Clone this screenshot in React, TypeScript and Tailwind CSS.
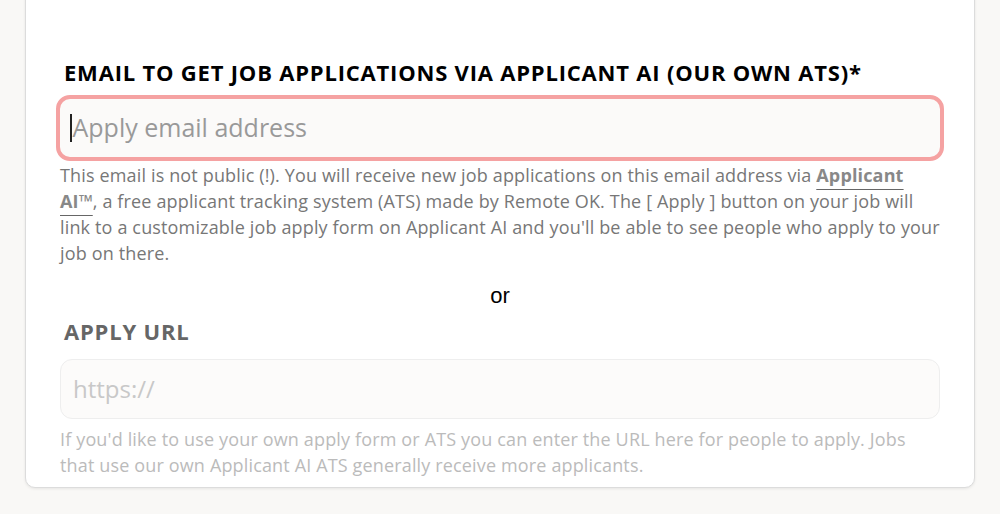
export default function App() {
  const font = { fontFamily: "'Open Sans', Lato, sans-serif" };
  return (
    <div className="h-[514px] overflow-hidden bg-[#f9f8f6]" style={font}>
      <div className="mx-[25px] -mt-[20px] h-[508px] rounded-b-[10px] border border-[#dcdcdc] bg-white px-[34px] pt-[78px] shadow-[0_1px_3px_rgba(0,0,0,0.08)]">
        <h2 className="ml-[4px] text-[22px] font-bold uppercase leading-[26px] tracking-[0.8px] text-black">
          Email to get job applications via Applicant AI (our own ATS)*
        </h2>
        <div className="-mx-[4px] mt-[10px] rounded-[14px] border-[4px] border-[#f5a2a2] bg-[#fbfaf9]">
          <div className="flex h-[58px] items-center pl-[10px] text-[25px] text-[#999]">
            <span className="mr-[1px] h-[28px] w-[1.5px] bg-[#222]" />
            Apply email address
          </div>
        </div>
        <p className="mt-[1px] text-[18px] leading-[26px] tracking-[0.15px] text-[#777]">
          This email is not public (!). You will receive new job applications on this email address via{" "}
          <span className="font-bold text-[#888] underline decoration-[#666] decoration-1 underline-offset-[7px]">Applicant AI™</span>, a free applicant tracking system (ATS) made by Remote OK. The [ Apply ] button on your job will link to a customizable job apply form on Applicant AI and you'll be able to see people who apply to your job on there.
        </p>
        <div className="mt-[17px] text-center text-[22px] leading-[26px] text-black" style={{ fontFamily: "'Liberation Sans', Arial, sans-serif" }}>
          or
        </div>
        <h3 className="ml-[4px] mt-[9px] text-[22px] font-bold uppercase leading-[26px] tracking-[0.8px] text-[#666]">Apply URL</h3>
        <div className="mt-[15px] flex h-[60px] items-center rounded-[12px] border border-[#eeeeee] bg-[#fcfbfa] pl-[12px] text-[24px] text-[#c8c8c8]">
          https://
        </div>
        <p className="mt-[7px] text-[18px] leading-[26px] tracking-[0.15px] text-[#bbb]">
          If you'd like to use your own apply form or ATS you can enter the URL here for people to apply. Jobs that use our own Applicant AI ATS generally receive more applicants.
        </p>
      </div>
    </div>
  );
}
